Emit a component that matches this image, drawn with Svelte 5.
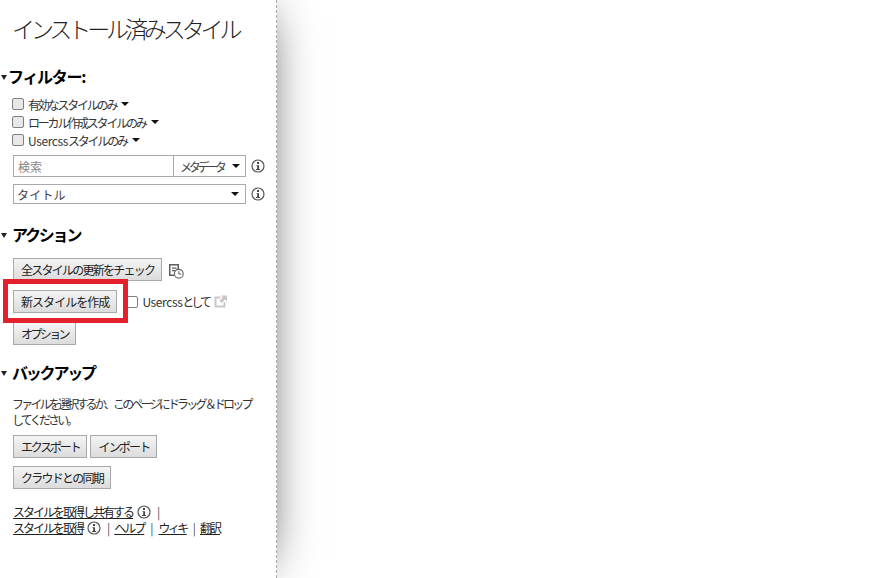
<script>
  const filters = [
    { latin: "", label: "有効なスタイルのみ" },
    { latin: "", label: "ローカル作成スタイルのみ" },
    { latin: "Usercss", label: "スタイルのみ" },
  ];
</script>

{#snippet info()}
  <svg class="info" viewBox="0 0 14 14" width="14" height="14">
    <circle cx="7" cy="7" r="6" fill="none" stroke="#555" stroke-width="1.2" />
    <rect x="6" y="3" width="2" height="2" fill="#444" />
    <path d="M5.5 6.2H8V10H9V11H5V10H6.2V7H5.5Z" fill="#444" />
  </svg>
{/snippet}

{#snippet caret()}
  <span class="caret"></span>
{/snippet}

<div class="page">
  <aside class="sidebar">
    <h1>インストール済みスタイル</h1>

    <h2 class="filter-head"><span class="twisty"></span>フィルター:</h2>
    <div class="filters">
      {#each filters as f}
        <label class="check"><span class="box"></span><span class="latin">{f.latin}</span>{f.label}{@render caret()}</label>
      {/each}
    </div>
    <div class="field-row first">
      <div class="field">
        <span class="placeholder">検索</span>
        <span class="meta">メタデータ{@render caret()}</span>
      </div>
      {@render info()}
    </div>
    <div class="field-row">
      <div class="field select">
        <span>タイトル</span>
        {@render caret()}
      </div>
      {@render info()}
    </div>

    <h2 class="action-head"><span class="twisty"></span>アクション</h2>
    <div class="actions">
      <div class="row">
        <button class="check-all">全スタイルの更新をチェック</button>
        <svg class="history" viewBox="0 0 16 16" width="16" height="16">
          <path d="M1 1H11V7H9.5V2.5H2.5V11.5H6V13H1Z" fill="#5f5f5f" />
          <path d="M4 4.5H8.5V5.8H4ZM4 7H7.5V8.3H4Z" fill="#5f5f5f" />
          <circle cx="10.8" cy="10.8" r="4.4" fill="#fff" stroke="#5f5f5f" stroke-width="1.1" />
          <path d="M10.8 8.2V11H13.3" fill="none" stroke="#5f5f5f" />
        </svg>
      </div>
      <div class="row">
        <button class="new-style">新スタイルを作成</button>
        <label class="check usercss"><span class="box plain"></span><span class="latin">Usercss</span>として</label>
        <svg class="ext" viewBox="0 0 13 13" width="13" height="13">
          <path d="M0.5 1.5H6.5V3.5H2.5V10.5H9.5V7H11.5V12.5H0.5Z" fill="#c8c8c8" />
          <path d="M7 0.5H13V6.5L11 4.6L7.6 8L5.4 5.8L8.8 2.4Z" fill="#c8c8c8" />
        </svg>
      </div>
      <div class="row">
        <button class="options">オプション</button>
      </div>
    </div>

    <h2 class="backup-head"><span class="twisty"></span>バックアップ</h2>
    <p class="note">ファイルを選択するか、このページにドラッグ＆ドロップ<br />してください。</p>
    <div class="row pair">
      <button class="export">エクスポート</button>
      <button class="import">インポート</button>
    </div>
    <div class="row sync">
      <button class="cloud">クラウドとの同期</button>
    </div>
    <div class="links">
      <div class="link-line"><a href="#top">スタイルを取得し共有する</a>{@render info()}<span class="sep">|</span></div>
      <div class="link-line">
        <a href="#top">スタイルを取得</a>{@render info()}<span class="sep">|</span><a href="#top">ヘルプ</a><span class="sep">|</span><a class="wiki" href="#top">ウィキ</a><span class="sep">|</span><a href="#top">翻訳</a>
      </div>
    </div>

    <div class="highlight"></div>
  </aside>
</div>

<style>
  :global(body) {
    margin: 0;
    background: #fff;
  }

  .page {
    width: 893px;
    height: 578px;
    overflow: hidden;
    font-family: "Noto Sans CJK JP", "Liberation Sans", sans-serif;
    color: #222;
  }

  .sidebar {
    position: relative;
    box-sizing: border-box;
    width: 277px;
    height: 578px;
    padding: 13px 0 0 12px;
    border-right: 1px dashed #aaa;
    box-shadow: 0 0 50px -18px #000;
    background: #fff;
    font-size: 12px;
    letter-spacing: -2px;
  }

  h1 {
    margin: 0;
    font-size: 23px;
    font-weight: 300;
    line-height: 30px;
    letter-spacing: -4.1px;
    white-space: nowrap;
    color: #222;
  }

  h2 {
    position: relative;
    margin: 0;
    font-size: 16px;
    font-weight: 700;
    line-height: 20px;
    letter-spacing: -2.2px;
    color: #000;
  }

  .twisty {
    position: absolute;
    left: -11px;
    top: 9px;
    width: 0;
    height: 0;
    border-left: 3px solid transparent;
    border-right: 3px solid transparent;
    border-top: 5px solid #222;
  }

  .filter-head {
    margin: 23px 0 0 -4px;
    letter-spacing: -1.3px;
  }

  .filter-head .twisty {
    left: -7px;
  }

  .filters {
    margin-top: 9px;
    display: flex;
    flex-direction: column;
  }

  .check {
    display: flex;
    align-items: center;
    height: 18px;
    letter-spacing: -2.2px;
    color: #333;
  }

  .latin {
    letter-spacing: -0.4px;
  }

  .box {
    box-sizing: border-box;
    width: 12px;
    height: 12px;
    margin-right: 4px;
    border: 1px solid #808080;
    border-radius: 2px;
    background: #e8e8e8;
  }

  .box.plain {
    background: #fff;
  }

  .caret {
    display: inline-block;
    width: 0;
    height: 0;
    margin-left: 5px;
    border-left: 4px solid transparent;
    border-right: 4px solid transparent;
    border-top: 4px solid #111;
  }

  .field-row {
    display: flex;
    align-items: center;
    gap: 5px;
    margin-top: 7px;
    width: 254px;
    margin-left: 1px;
  }

  .field-row.first {
    margin-top: 6px;
  }

  .field {
    box-sizing: border-box;
    width: 233px;
    height: 22px;
    display: flex;
    align-items: center;
    border: 1px solid #a9a9a9;
    color: #444;
  }

  .placeholder {
    flex: 1;
    padding-left: 4px;
    color: #888;
    letter-spacing: 0;
  }

  .meta {
    box-sizing: border-box;
    width: 72px;
    height: 100%;
    display: flex;
    align-items: center;
    padding-left: 6px;
    border-left: 1px solid #a9a9a9;
    letter-spacing: -3.3px;
    white-space: nowrap;
  }

  .meta .caret {
    margin-left: 8px;
  }

  .select {
    height: 20px;
    justify-content: space-between;
    padding: 0 6px 0 3px;
    letter-spacing: 0.2px;
  }

  .info {
    flex: none;
  }

  .action-head {
    margin-top: 20px;
  }

  .actions {
    margin-top: 14px;
    margin-left: 1px;
    display: flex;
    flex-direction: column;
    gap: 9px;
  }

  .row {
    display: flex;
    align-items: center;
  }

  button {
    box-sizing: border-box;
    height: 23px;
    padding: 0 7px;
    border: 1px solid #a9a9a9;
    background: linear-gradient(#f4f4f4, #dcdcdc);
    font: inherit;
    letter-spacing: inherit;
    white-space: nowrap;
    color: #222;
  }

  .check-all {
    letter-spacing: -1.75px;
  }

  .new-style {
    letter-spacing: -0.95px;
  }

  .options {
    letter-spacing: -2.6px;
  }

  .export {
    letter-spacing: -2.2px;
  }

  .import {
    letter-spacing: -1.8px;
  }

  .cloud {
    letter-spacing: -1.75px;
  }

  .history {
    margin: 3px 0 0 6px;
  }

  .usercss {
    margin-left: 9px;
    letter-spacing: -3px;
  }

  .ext {
    margin-left: 5px;
  }

  .backup-head {
    margin-top: 17px;
  }

  .note {
    margin: 14px 0 0;
    line-height: 16px;
    letter-spacing: -2.8px;
    white-space: nowrap;
    color: #333;
  }

  .pair {
    margin: 7px 0 0 1px;
    gap: 3px;
  }

  .sync {
    margin: 8px 0 0 1px;
  }

  .links {
    margin: 15px 0 0 1px;
    line-height: 16px;
  }

  .link-line {
    display: flex;
    align-items: center;
    height: 16px;
  }

  .link-line a {
    color: #222;
  }

  .link-line .wiki {
    letter-spacing: -2.6px;
    margin-left: 1px;
  }

  .link-line .info {
    margin-left: 4px;
  }

  .sep {
    margin: 0 6px;
    color: #222;
    opacity: 0.8;
  }

  .highlight {
    position: absolute;
    left: 3px;
    top: 279px;
    width: 125px;
    height: 44px;
    box-sizing: border-box;
    border: 5px solid #e4202c;
  }
</style>
